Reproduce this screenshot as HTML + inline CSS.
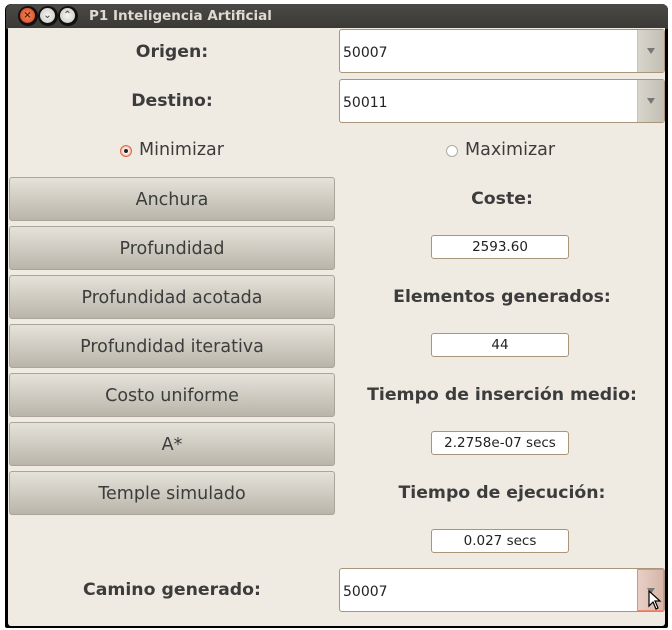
<!DOCTYPE html>
<html><head><meta charset="utf-8"><style>
*{box-sizing:border-box;margin:0;padding:0}
body{width:672px;height:630px;background:#fff;position:relative;overflow:hidden;font-family:"DejaVu Sans","Liberation Sans",sans-serif;color:#3c3c3c}
.win{position:absolute;left:5px;top:4px;width:663px;height:624px;background:#000;border-radius:6px 6px 2px 2px}
.tb{position:absolute;left:6px;top:4px;width:662px;height:25px;background:linear-gradient(#4a4945,#3a3935);border-radius:6px 6px 0 0}
.tt{position:absolute;left:89px;top:8px;color:#dfdbd2;font-weight:bold;font-size:13.5px}
.body{position:absolute;left:8px;top:28px;width:657px;height:598px;background:#f0ebe2;border-radius:0 0 3px 3px}
.c{position:absolute;width:20px;height:20px;border-radius:50%;top:6px;background:#111}
.ci{position:absolute;left:2px;top:2px;width:15px;height:15px;border-radius:50%;font-size:10px;line-height:15px;text-align:center;font-weight:bold}
.a{position:absolute}
.lbl{position:absolute;font-weight:bold;font-size:17.3px;text-align:center}
.btn{position:absolute;left:9px;width:326px;height:44px;border:1px solid #a9a598;border-radius:3px;background:linear-gradient(#e5e2da,#b9b5a9);font-size:17.5px;text-align:center;line-height:44px;color:#3c3c3c}
.cb{position:absolute;left:339px;width:326px;height:44px;border:1px solid #a9957a;border-radius:3px;background:#fff;font-size:14px;line-height:46px;padding-left:3px;color:#222}
.cb .ar{position:absolute;right:0;top:0;width:27px;height:42px;background:linear-gradient(90deg,#d8d5cd,#c2beb3);border-left:1px solid #c8c4ba}
.cb .ar:after{content:"";position:absolute;left:9px;top:18px;border:4px solid transparent;border-top:6px solid #777;border-bottom:0}
.en{position:absolute;left:431px;width:138px;height:24px;border:1px solid #a9957a;border-radius:3px;background:#fff;font-size:13.5px;text-align:center;line-height:23px;color:#222}
</style></head><body>
<div class="win"></div>
<div class="tb"></div>
<div class="c" style="left:18px"><div class="ci" style="background:radial-gradient(#f58a5c,#d3431d);color:#5a1a08">×</div></div>
<div class="c" style="left:38px"><div class="ci" style="background:radial-gradient(#f5f4f0,#c8c6c0);color:#555">⌄</div></div>
<div class="c" style="left:58px"><div class="ci" style="background:radial-gradient(#f5f4f0,#c8c6c0);color:#555">⌃</div></div>
<div class="tt">P1 Inteligencia Artificial</div>
<div class="body"></div>
<div class="lbl" style="left:9px;width:326px;top:42px">Origen:</div>
<div class="lbl" style="left:9px;width:326px;top:91px">Destino:</div>
<div class="cb" style="top:29px">50007<div class="ar"></div></div>
<div class="cb" style="top:79px">50011<div class="ar"></div></div>
<div class="a" style="left:120px;top:145px;width:12px;height:12px;border-radius:50%;background:radial-gradient(#fff 30%,#f08060);border:1px solid #d86a4a"><div style="position:absolute;left:3px;top:3px;width:4px;height:4px;border-radius:50%;background:#222"></div></div>
<div class="a" style="left:139px;top:140px;font-size:17.5px">Minimizar</div>
<div class="a" style="left:446px;top:145px;width:12px;height:12px;border-radius:50%;background:#fff;border:1px solid #b0aba0"></div>
<div class="a" style="left:465px;top:140px;font-size:17.5px">Maximizar</div>
<div class="btn" style="top:177px">Anchura</div>
<div class="btn" style="top:226px">Profundidad</div>
<div class="btn" style="top:275px">Profundidad acotada</div>
<div class="btn" style="top:324px">Profundidad iterativa</div>
<div class="btn" style="top:373px">Costo uniforme</div>
<div class="btn" style="top:422px">A*</div>
<div class="btn" style="top:471px">Temple simulado</div>
<div class="lbl" style="left:339px;width:326px;top:189px">Coste:</div>
<div class="en" style="top:235px">2593.60</div>
<div class="lbl" style="left:339px;width:326px;top:287px">Elementos generados:</div>
<div class="en" style="top:333px">44</div>
<div class="lbl" style="left:339px;width:326px;top:385px">Tiempo de inserción medio:</div>
<div class="en" style="top:431px">2.2758e-07 secs</div>
<div class="lbl" style="left:339px;width:326px;top:483px">Tiempo de ejecución:</div>
<div class="en" style="top:529px">0.027 secs</div>
<div class="lbl" style="left:9px;width:326px;top:580px">Camino generado:</div>
<div class="cb" style="top:568px">50007<div class="ar" style="background:linear-gradient(90deg,#e8cfc5,#d6b6a9);border:1px solid #f08a70"></div></div>
<svg class="a" style="left:648px;top:590px" width="16" height="22" viewBox="0 0 16 22"><path d="M1 1 L1 16 L5 12 L8 19 L10 18 L7 11 L12 11 Z" fill="#fff" stroke="#000" stroke-width="1.2"/></svg>
</body></html>
